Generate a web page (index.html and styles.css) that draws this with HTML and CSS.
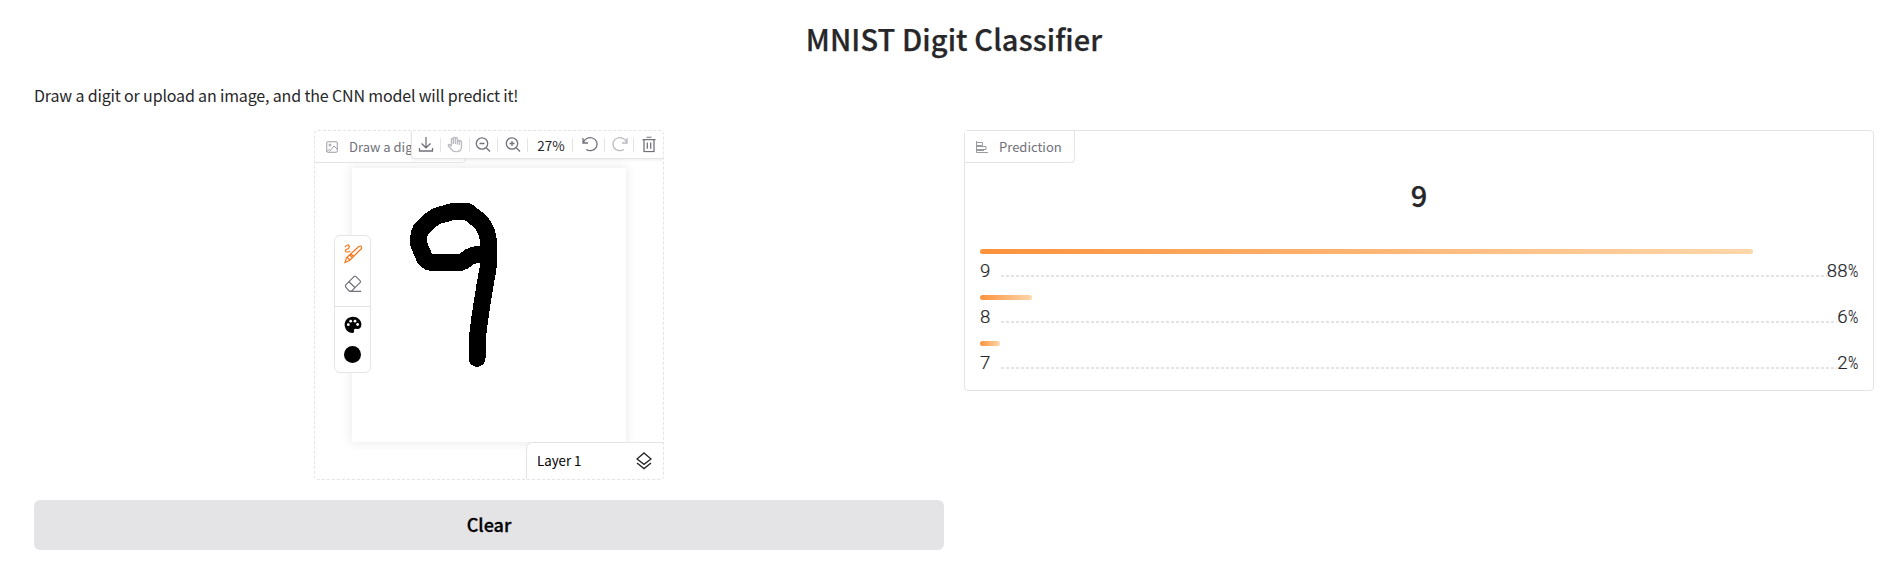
FILE: index.html
```html
<!DOCTYPE html>
<html lang="en">
<head>
<meta charset="utf-8">
<title>MNIST Digit Classifier</title>
<link rel="stylesheet" href="styles.css">
</head>
<body>
<main class="app">
  <h1 class="title">MNIST Digit Classifier</h1>
  <p class="intro">Draw a digit or upload an image, and the CNN model will predict it!</p>
  <div class="columns">
    <section class="input-column">
      <div class="editor">
        <div class="canvas">
          <svg class="drawing" width="130" height="200" viewBox="0 0 390 600"><path d="M261 535V482L268 425L275 378L285 315L294 265V175Q290 145 268 122L233 95H188L150 105Q135 109 122 120L93 148Q83 168 87 195L105 237Q115 248 132 248H208Q220 246 238 231Q258 221 285 222"/></svg>
        </div>
        <div class="block-label editor-label">
          <svg width="12" height="12" viewBox="0 0 24 24"><rect x="1.5" y="1.5" width="21" height="21" rx="2"/><circle cx="8" cy="8" r="2"/><path d="M2 21L7 16M7 21L16 10L22 16"/></svg>
          <span>Draw a digit here</span>
        </div>
        <div class="toolbar">
          <span class="tool download"><svg width="16" height="16" viewBox="0 0 16 16"><path d="M8 .5V11M3.5 7L8 11.3L12.5 7M1.5 11.5V14.5H14.5V11.5"/></svg></span>
          <span class="tool faded"><svg width="16" height="16" viewBox="0 0 16 16"><path d="M4.4 10V3Q4.4 2 5.3 2T6.3 3V7.5V1.6Q6.3.6 7.3.6T8.3 1.6V7.5V2Q8.3 1 9.3 1T10.3 2V8V5Q10.3 4 12 4T14.5 5V10Q14.5 15.3 9.3 15.3Q6.5 15.3 5 13.5L1.3 9.4Q1 8.2 2 8T4.4 10M12.3 4V8.5"/></svg></span>
          <span class="tool"><svg width="16" height="16" viewBox="0 0 16 16"><circle cx="7" cy="7" r="5.7"/><path d="M11.2 11.2L15 15M4.5 7H9.5"/></svg></span>
          <span class="tool zoom-in"><svg width="16" height="16" viewBox="0 0 16 16"><circle cx="7" cy="7" r="5.7"/><path d="M11.2 11.2L15 15M4.5 7H9.5M7 4.5V9.5"/></svg></span>
          <span class="tool percent">27%</span>
          <span class="tool undo"><svg width="17" height="16" viewBox="0 0 17 16"><path d="M1 1.5V6.5H6M1.3 6.3A7 6.5 0 1 1 4.2 13"/></svg></span>
          <span class="tool faded"><svg width="17" height="16" viewBox="0 0 17 16"><path d="M16 1.5V6.5H11M15.7 6.3A7 6.5 0 1 0 12.8 13"/></svg></span>
          <span class="tool trash"><svg width="14" height="16" viewBox="0 0 14 16"><path d="M.5 3.2H13.5M4.5 .7H9.5M2 3.2V15.2H12V3.2M5.3 6V12.3M8.7 6V12.3"/></svg></span>
        </div>
        <div class="side-tools">
          <svg class="brush" width="18" height="20" viewBox="0 0 18 20"><path d="M1 3Q4-.5 5 2T2 5.5Q.5 8 3 8T6.3 7M14.5 2.7Q17 1.2 17.5 3T16 6L5.5 16.5L1 18.5L2.5 13.8ZM5.5 10.8L9 14M3 13.3L6.2 16.4M6.8 9.7L10.2 12.8"/></svg>
          <svg class="eraser" width="18" height="18" viewBox="0 0 18 18"><path d="M2 9.7L10 1.7Q11 .7 12 1.7L16 5.7Q17 6.7 16 7.7L7.5 16.2H5.3L2 12.3Q.9 11 2 9.7ZM5 6.8L11.2 12.8M5.3 16.3H17.2"/></svg>
          <span class="side-divider"></span>
          <svg class="palette" width="18" height="18" viewBox="0 0 18 18"><path d="M9 .8C4.2.8.6 4.4.6 8.8C.6 13 4 17 8.3 17C10 17 10.4 15.7 10 14.5C9.7 13.4 10.6 12.5 12 12.8C15.5 13.6 17.4 11.5 17.4 8.5C17.2 4 13.6.8 9 .8Z"/><g><circle cx="4.3" cy="8.7" r="1.4"/><circle cx="6.7" cy="5.2" r="1.4"/><circle cx="11" cy="5.2" r="1.4"/><circle cx="13.6" cy="8.5" r="1.4"/></g></svg>
          <span class="swatch"></span>
        </div>
        <div class="layers">
          <span>Layer 1</span>
          <svg width="16" height="18" viewBox="0 0 16 18"><path d="M8 1L15 7L8 12.3L1 7ZM1 11L8 16.5L15 11"/></svg>
        </div>
      </div>
      <button class="clear">Clear</button>
    </section>
    <section class="prediction">
      <div class="block-label prediction-label">
        <svg width="12" height="12" viewBox="0 0 12 12"><path d="M.5 0V11.5H12M.5 1.5H6.5V4.5H.5M.5 5.5H10V8.5H.5M.5 9.5H8"/></svg>
        <span>Prediction</span>
      </div>
      <h2 class="result">9</h2>
      <div class="row"><div class="bar" style="width:88%"></div><div class="line"><span>9</span><i></i><span>88<b>%</b></span></div></div>
      <div class="row"><div class="bar" style="width:5.9%"></div><div class="line"><span>8</span><i></i><span>6<b>%</b></span></div></div>
      <div class="row"><div class="bar" style="width:2.3%"></div><div class="line"><span>7</span><i></i><span>2<b>%</b></span></div></div>
    </section>
  </div>
</main>
</body>
</html>
```
FILE: styles.css
```css
* { box-sizing: border-box; }
body { margin: 0; background: #fff; color: #27272a; font-family: "Noto Sans CJK SC", "Noto Sans", sans-serif; }
svg { fill: none; stroke: currentColor; flex: none; display: block; }
.app { padding: 20px 27px 0 34px; }
.title { margin: 0; height: 42px; line-height: 37px; font-size: 29px; font-weight: 500; letter-spacing: .1px; -webkit-text-stroke: .25px #27272a; text-align: center; white-space: nowrap; }
.intro { margin: 20px 0 0; height: 28px; line-height: 26px; font-size: 16px; letter-spacing: -.16px; white-space: nowrap; }
.columns { display: grid; grid-template-columns: 910px 910px; gap: 20px; margin-top: 20px; align-items: start; }
.input-column { display: flex; flex-direction: column; align-items: center; gap: 20px; }
.editor { position: relative; width: 350px; height: 350px; border: 1px dashed #e4e4e7; border-radius: 4px; overflow: hidden; }
.canvas { width: 274px; height: 274px; margin: 37px 0 0 37px; background: #fff; box-shadow: 0 0 9px 2px rgba(0,0,0,.07); }
.drawing { margin-left: 38px; transform: translateY(12px); }
.drawing path { stroke: #000; stroke-width: 51; stroke-linecap: round; stroke-linejoin: round; shape-rendering: crispEdges; }
.block-label { display: flex; align-items: center; gap: 11px; height: 32px; padding: 0 11px; color: #71717a; font-size: 13px; line-height: 20px; border: 1px solid #e4e4e7; border-width: 0 1px 1px 0; border-radius: 0 0 4px 0; white-space: nowrap; background: #fff; }
.block-label svg { color: #9b9ba2; }
.editor-label { position: absolute; left: 0; top: 0; width: 151px; }
.editor-label svg { stroke-width: 2; }
.toolbar { position: absolute; top: 0; right: 0; display: flex; align-items: center; height: 28px; width: 252px; background: #fff; border: 1px solid #e4e4e7; border-width: 0 0 1px 1px; border-radius: 0 0 0 4px; box-shadow: 0 1px 3px rgba(0,0,0,.08); color: #71717a; }
.tool { display: flex; align-items: center; justify-content: center; width: 29px; height: 14px; border-right: 1px solid #e4e4e7; stroke-width: 1.3; }
.tool svg { transform: translateY(-.5px); }
.faded { color: #babac0; }
.zoom-in { width: 30px; }
.percent { width: 45px; color: #27272a; font-size: 13.5px; padding-left: 2px; }
.undo { width: 33px; padding-left: 4px; }
.trash { border: 0; padding-left: 1px; }
.side-tools { position: absolute; left: 19px; top: 104px; width: 37px; height: 138px; background: #fff; border: 1px solid #e4e4e7; border-radius: 6px; display: flex; flex-direction: column; align-items: center; padding-top: 8px; }
.brush { color: #f97316; stroke-width: 1.2; }
.eraser { color: #71717a; margin-top: 11px; stroke-width: 1.2; }
.side-divider { width: 100%; border-top: 1px solid #e4e4e7; margin-top: 13px; }
.palette { margin-top: 9px; fill: #000; stroke: none; }
.palette g { fill: #fff; }
.swatch { width: 17px; height: 17px; border-radius: 50%; background: #000; margin-top: 12px; }
.layers { position: absolute; right: 0; bottom: 0; width: 137px; height: 37px; display: flex; align-items: center; justify-content: space-between; padding: 0 11px 0 10px; background: #fff; border: 1px solid #e4e4e7; border-width: 1px 0 0 1px; border-radius: 6px 0 0 0; color: #000; font-size: 13.3px; line-height: 20px; }
.layers svg { color: #27272a; stroke-width: 1.4; }
.clear { width: 910px; height: 50px; border: 0; border-radius: 6px; background: #e4e4e7; color: #000; font: 500 18px/27px "Noto Sans CJK SC", sans-serif; -webkit-text-stroke: .3px #000; padding: 0 0 1px; }
.prediction { height: 261px; border: 1px solid #e4e4e7; border-radius: 4px; }
.prediction-label { width: 110px; }
.result { margin: 16px 0 0; height: 70px; line-height: 31px; font-size: 29px; font-weight: 500; -webkit-text-stroke: .25px #27272a; text-align: center; }
.row { height: 46px; padding: 0 15px; }
.bar { height: 5px; border-radius: 3px; background: linear-gradient(90deg, #fb923c, #fed7aa); }
.line { display: flex; height: 30px; line-height: 35px; font-family: Roboto, sans-serif; font-size: 18.6px; font-weight: 300; -webkit-text-stroke: .2px #27272a; }
.line i { flex: 1; height: 2px; margin: 21px 0 0 11px; background: repeating-linear-gradient(90deg, #e4e4e7 0 3px, transparent 3px 5px); }
.line b { display: inline-block; width: 10.5px; font-weight: 300; transform: scaleX(.75); transform-origin: left; }
```
